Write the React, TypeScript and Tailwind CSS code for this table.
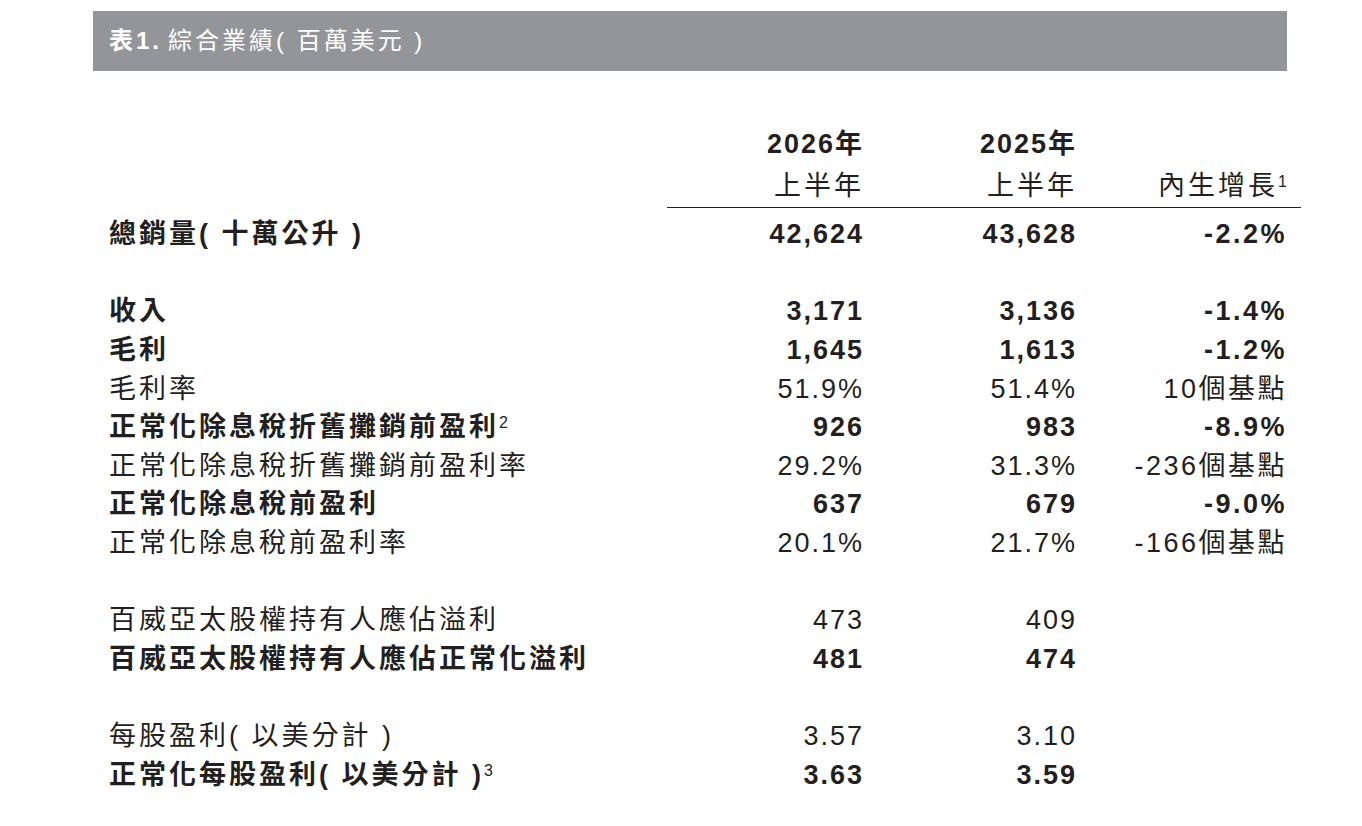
import React from "react";

type Row = {
  label?: string;
  sup?: string;
  a?: string;
  b?: string;
  c?: string;
  bold?: boolean;
};

const rows: Row[] = [
  { label: "總銷量( 十萬公升 )", a: "42,624", b: "43,628", c: "-2.2%", bold: true },
  {},
  { label: "收入", a: "3,171", b: "3,136", c: "-1.4%", bold: true },
  { label: "毛利", a: "1,645", b: "1,613", c: "-1.2%", bold: true },
  { label: "毛利率", a: "51.9%", b: "51.4%", c: "10個基點" },
  { label: "正常化除息稅折舊攤銷前盈利", sup: "2", a: "926", b: "983", c: "-8.9%", bold: true },
  { label: "正常化除息稅折舊攤銷前盈利率", a: "29.2%", b: "31.3%", c: "-236個基點" },
  { label: "正常化除息稅前盈利", a: "637", b: "679", c: "-9.0%", bold: true },
  { label: "正常化除息稅前盈利率", a: "20.1%", b: "21.7%", c: "-166個基點" },
  {},
  { label: "百威亞太股權持有人應佔溢利", a: "473", b: "409" },
  { label: "百威亞太股權持有人應佔正常化溢利", a: "481", b: "474", bold: true },
  {},
  { label: "每股盈利( 以美分計 )", a: "3.57", b: "3.10" },
  { label: "正常化每股盈利( 以美分計 )", sup: "3", a: "3.63", b: "3.59", bold: true },
];

const font = "font-['Liberation_Sans','Noto_Sans_CJK_TC',sans-serif]";

function Sup({ n }: { n: string }) {
  return <span className="text-[16px] leading-none tracking-normal font-normal align-[8px]">{n}</span>;
}

export default function App() {
  return (
    <div className={`w-[1362px] h-[826px] bg-white pt-[11px] text-[#231f20] ${font}`}>
      <div className="ml-[93px] w-[1194px] h-[60px] bg-[#939598] flex items-center pl-4 text-white text-[24px] tracking-[3px]">
        <span className="font-bold">表1.</span>
        <span className="ml-[6px]">綜合業績( 百萬美元 )</span>
      </div>

      <div className="pl-[109px] mt-[52px] text-[27px]">
        <div className="grid grid-cols-[560px_195px_213px_210px] h-[42px] items-center">
          <div />
          <div className="text-right font-bold tracking-[2px]">2026年</div>
          <div className="text-right font-bold tracking-[2px]">2025年</div>
          <div />
        </div>
        <div className="grid grid-cols-[560px_195px_213px_210px] h-[42px] items-center">
          <div />
          <div className="text-right tracking-[3px]">上半年</div>
          <div className="text-right tracking-[3px]">上半年</div>
          <div className="text-right tracking-[3px] whitespace-nowrap">
            內生增長<Sup n="1" />
          </div>
        </div>
        <div className="ml-[558px] w-[634px] h-px bg-[#231f20]" />

        <div className="mt-[6px]">
          {rows.map((r, i) =>
            r.label ? (
              <div
                key={i}
                className={`grid grid-cols-[560px_195px_213px_210px] h-[38.64px] items-center ${r.bold ? "font-bold" : "font-normal"}`}
              >
                <div className="tracking-[3px] whitespace-nowrap">
                  {r.label}
                  {r.sup && <Sup n={r.sup} />}
                </div>
                <div className="text-right tracking-[2px]">{r.a}</div>
                <div className="text-right tracking-[2px]">{r.b}</div>
                <div className="text-right tracking-[2.5px]">{r.c}</div>
              </div>
            ) : (
              <div key={i} className="h-[38.64px]" />
            )
          )}
        </div>
      </div>
    </div>
  );
}
